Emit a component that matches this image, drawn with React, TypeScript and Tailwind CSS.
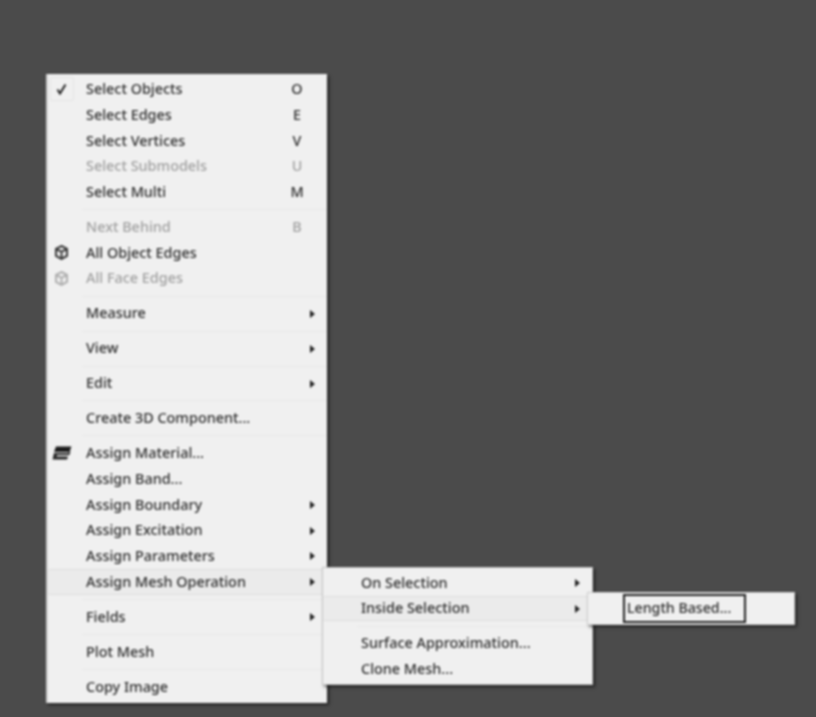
const sans = "font-['Noto_Sans','Open_Sans',sans-serif]";

type Row =
  | { sep: true }
  | {
      label: string;
      key?: string;
      off?: boolean;
      sub?: boolean;
      hot?: boolean;
      icon?: "check" | "cube" | "cubeOff" | "material";
    };

const mainMenu: Row[] = [
  { label: "Select Objects", key: "O", icon: "check" },
  { label: "Select Edges", key: "E" },
  { label: "Select Vertices", key: "V" },
  { label: "Select Submodels", key: "U", off: true },
  { label: "Select Multi", key: "M" },
  { sep: true },
  { label: "Next Behind", key: "B", off: true },
  { label: "All Object Edges", icon: "cube" },
  { label: "All Face Edges", off: true, icon: "cubeOff" },
  { sep: true },
  { label: "Measure", sub: true },
  { sep: true },
  { label: "View", sub: true },
  { sep: true },
  { label: "Edit", sub: true },
  { sep: true },
  { label: "Create 3D Component..." },
  { sep: true },
  { label: "Assign Material...", icon: "material" },
  { label: "Assign Band..." },
  { label: "Assign Boundary", sub: true },
  { label: "Assign Excitation", sub: true },
  { label: "Assign Parameters", sub: true },
  { label: "Assign Mesh Operation", sub: true, hot: true },
  { sep: true },
  { label: "Fields", sub: true },
  { sep: true },
  { label: "Plot Mesh" },
  { sep: true },
  { label: "Copy Image" },
];

const meshMenu: Row[] = [
  { label: "On Selection", sub: true },
  { label: "Inside Selection", sub: true, hot: true },
  { sep: true },
  { label: "Surface Approximation..." },
  { label: "Clone Mesh..." },
];

function RowIcon({ name }: { name: string }) {
  if (name === "check") {
    return (
      <span className="flex h-[24px] w-[24px] items-center justify-center rounded-[2px] border border-[#e4e4e4]">
        <svg width="11" height="12" viewBox="0 0 11 12">
          <path d="M1.5 6.5 L4 10.5 L9.5 1.5" fill="none" stroke="#222" strokeWidth="2" />
        </svg>
      </span>
    );
  }
  if (name === "material") {
    return (
      <svg width="20" height="14" viewBox="0 0 20 14">
        <path d="M4 0.5 H19.5 L17.5 6 H2 Z" fill="#1c1c1c" />
        <path d="M2 7 H16 L18.5 5 L17.5 9 H5 L4.5 10.5 H16 L15 13.5 H0.5 Z" fill="#262626" />
      </svg>
    );
  }
  const stroke = name === "cube" ? "#3a3a3a" : "#b0b0b0";
  return (
    <svg width="13" height="15" viewBox="0 0 13 15">
      <path
        d="M6.5 1 L12 3.8 V11 L6.5 14 L1 11 V3.8 Z M1 3.8 L6.5 6.8 L12 3.8 M6.5 6.8 V14"
        fill="none"
        stroke={stroke}
        strokeWidth="2"
      />
    </svg>
  );
}

function MenuRows({ rows, gutter }: { rows: Row[]; gutter: string }) {
  return (
    <>
      {rows.map((row, i) => {
        if ("sep" in row) {
          return (
            <div key={i} className="flex h-[9.3px] items-center pl-[34px]">
              <div className="h-px w-full bg-[#e8e8e8]" />
            </div>
          );
        }
        return (
          <div
            key={i}
            className={`flex h-[25.7px] items-center text-[14.4px] leading-none font-medium ${
              row.off ? "text-[#a0a0a0]" : "text-[#2e2e2e]"
            } ${row.hot ? "rounded-[2px] border-y border-[#dedede] bg-[#ebebeb]" : ""}`}
          >
            <span className={`flex shrink-0 items-center justify-center ${gutter}`}>
              {row.icon && <RowIcon name={row.icon} />}
            </span>
            <span className="flex-1 whitespace-nowrap">{row.label}</span>
            {row.key && <span className="mr-[23px] w-[14px] text-center">{row.key}</span>}
            {row.sub && (
              <svg className="mr-[12px]" width="5" height="8" viewBox="0 0 5 8">
                <path d="M0 0 L5 4 L0 8 Z" fill="#222" />
              </svg>
            )}
          </div>
        );
      })}
    </>
  );
}

export default function App() {
  return (
    <div className={`h-[717px] w-[816px] overflow-hidden bg-[#4b4b4b] pl-[46px] pt-[74px] ${sans}`}>
      <div className="relative h-[629px] w-[281px] border-l-2 border-[#cfcfcf] bg-[#f0f0f0] pt-[2.6px] shadow-[2px_2px_3px_rgba(0,0,0,0.55)] blur-[0.9px]">
        <MenuRows rows={mainMenu} gutter="w-[38px] pr-[11px]" />

        <div className="absolute left-[274px] top-[493px] h-[118px] w-[271px] border border-[#c4c4c4] bg-[#f0f0f0] pt-[2px] shadow-[2px_2px_3px_rgba(0,0,0,0.55)]">
          <MenuRows rows={meshMenu} gutter="w-[38px]" />
        </div>

        <div className="absolute left-[539px] top-[518px] flex h-[33px] w-[208px] items-center border border-[#cfcfcf] bg-[#f0f0f0] pl-[35px] shadow-[2px_2px_3px_rgba(0,0,0,0.55)]">
          <span className="flex h-[29px] w-[123px] items-center border-2 border-[#222] pl-[2px] text-[14.2px] leading-none font-medium whitespace-nowrap text-[#2e2e2e]">
            Length Based...
          </span>
        </div>
      </div>
    </div>
  );
}
